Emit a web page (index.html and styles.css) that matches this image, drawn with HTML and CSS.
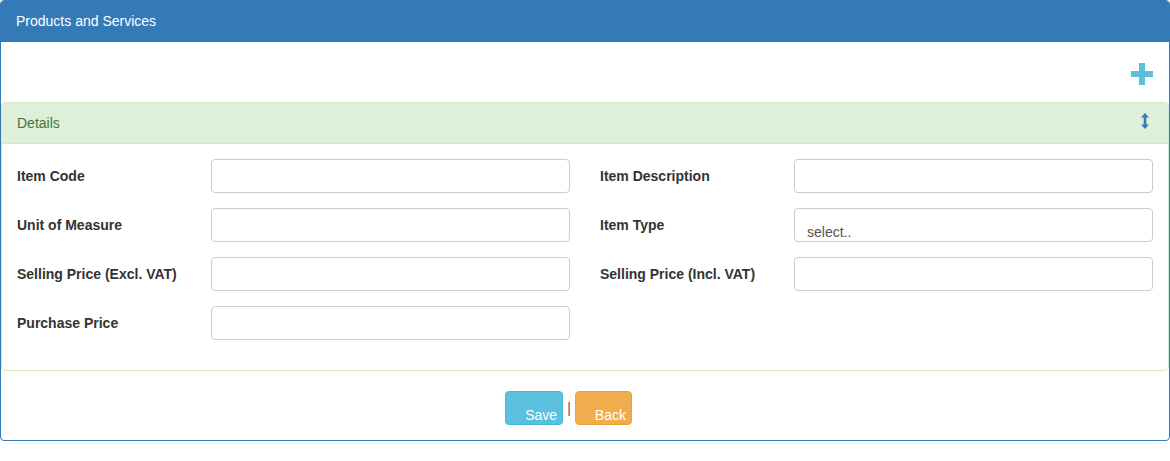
FILE: index.html
```html
<!DOCTYPE html>
<html lang="en">
<head>
    <meta charset="UTF-8">
    <meta name="viewport" content="width=device-width, initial-scale=1.0">
    <title>Products and Services</title>
    <link rel="stylesheet" href="styles.css">
</head>
<body>
    <div class="panel panel-primary">
        <div class="panel-heading">Products and Services</div>

        <!-- Add new item -->
        <div class="toolbar">
            <button class="add-btn" title="Add">
                <svg width="22" height="22" viewBox="0 0 22 22">
                    <path d="M8 0h6v8h8v6h-8v8h-6v-8h-8v-6h8z" fill="#5bc0de"/>
                </svg>
            </button>
        </div>

        <div class="panel panel-success">
            <div class="panel-heading details-heading">
                <span>Details</span>
                <svg class="resize-icon" width="8" height="16" viewBox="0 0 8 16">
                    <path d="M4 0L8 4.5H5.3v7H8L4 16 0 11.5h2.7v-7H0z" fill="#337ab7"/>
                </svg>
            </div>
            <form class="details-form">
                <label for="item-code">Item Code</label>
                <input type="text" id="item-code" class="form-control">
                <label for="item-desc">Item Description</label>
                <input type="text" id="item-desc" class="form-control">

                <label for="uom">Unit of Measure</label>
                <input type="text" id="uom" class="form-control">
                <label for="item-type">Item Type</label>
                <div class="form-control select-box" id="item-type">select..</div>

                <label for="price-excl">Selling Price (Excl. VAT)</label>
                <input type="text" id="price-excl" class="form-control">
                <label for="price-incl">Selling Price (Incl. VAT)</label>
                <input type="text" id="price-incl" class="form-control">

                <label for="purchase">Purchase Price</label>
                <input type="text" id="purchase" class="form-control">
            </form>
        </div>

        <div class="actions">
            <button class="btn btn-info">Save</button>
            <span class="sep">|</span>
            <button class="btn btn-warning">Back</button>
        </div>
    </div>
</body>
</html>
```

FILE: styles.css
```css
body {
    margin: 0;
    font-family: "Liberation Sans", Arial, sans-serif;
    font-size: 14px;
    color: #333;
    background: #fff;
}
.panel {
    border: 1px solid transparent;
    border-radius: 4px;
    background: #fff;
}
.panel-primary {
    width: 1168px;
    height: 439px;
    border-color: #337ab7;
}
.panel-primary > .panel-heading {
    background-color: #337ab7;
    color: #fff;
    height: 41px;
    line-height: 40px;
    padding: 0 15px;
    border-radius: 3px 3px 0 0;
}
.toolbar {
    height: 60px;
    display: flex;
    justify-content: flex-end;
    align-items: flex-start;
    padding-right: 16px;
}
.add-btn {
    background: none;
    border: none;
    padding: 0;
    margin-top: 21px;
    cursor: pointer;
}
.panel-success {
    border-color: #d6e9c6;
}
.details-heading {
    background-color: #dff0d8;
    color: #3c763d;
    border-bottom: 1px solid #d6e9c6;
    height: 40px;
    padding: 0 15px;
    display: flex;
    align-items: center;
    justify-content: space-between;
    border-radius: 3px 3px 0 0;
}
.resize-icon {
    margin-right: 4px;
    margin-top: -4px;
}
/* label / input pairs, two per row */
.details-form {
    display: grid;
    grid-template-columns: 194px 389px 194px 359px;
    row-gap: 15px;
    padding: 15px 15px 30px 15px;
    align-items: center;
}
.details-form label {
    font-weight: bold;
    color: #333;
}
.form-control {
    box-sizing: border-box;
    height: 34px;
    width: 359px;
    border: 1px solid #ccc;
    border-radius: 4px;
    font-family: inherit;
    font-size: 14px;
    padding: 6px 12px;
}
.select-box {
    color: #555;
    padding: 15px 12px 0 12px;
    line-height: 17px;
}
.actions {
    display: flex;
    justify-content: center;
    align-items: center;
    gap: 4px;
    margin-top: 20px;
    padding-right: 33px;
}
.btn {
    box-sizing: border-box;
    height: 34px;
    border: 1px solid transparent;
    border-radius: 4px;
    color: #fff;
    font-family: inherit;
    font-size: 14px;
    padding: 13px 8px 0 19px;
    line-height: 20px;
    cursor: pointer;
}
.btn-info {
    background-color: #5bc0de;
    border-color: #46b8da;
    width: 58px;
}
.btn-warning {
    background-color: #f0ad4e;
    border-color: #eea236;
    width: 57px;
}
.sep {
    color: #555;
    font-size: 14px;
}
```
